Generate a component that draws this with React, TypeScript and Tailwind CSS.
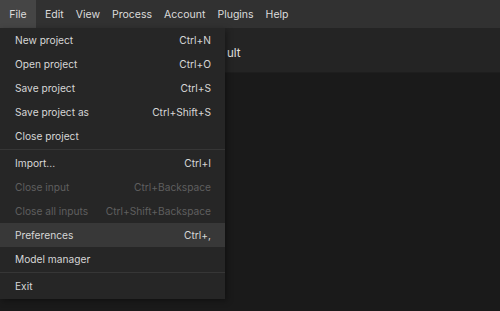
import React from "react";

type Item =
  | { label: string; shortcut?: string; disabled?: boolean; active?: boolean }
  | "sep";

const menus = ["Edit", "View", "Process", "Account", "Plugins", "Help"];

const items: Item[] = [
  { label: "New project", shortcut: "Ctrl+N" },
  { label: "Open project", shortcut: "Ctrl+O" },
  { label: "Save project", shortcut: "Ctrl+S" },
  { label: "Save project as", shortcut: "Ctrl+Shift+S" },
  { label: "Close project" },
  "sep",
  { label: "Import...", shortcut: "Ctrl+I" },
  { label: "Close input", shortcut: "Ctrl+Backspace", disabled: true },
  { label: "Close all inputs", shortcut: "Ctrl+Shift+Backspace", disabled: true },
  { label: "Preferences", shortcut: "Ctrl+,", active: true },
  { label: "Model manager" },
  "sep",
  { label: "Exit" },
];

const App: React.FC = () => {
  return (
    <div
      className="w-[500px] h-[311px] bg-[#1a1a1a] flex flex-col relative overflow-hidden text-[10.2px]"
      style={{ fontFamily: "Inter, 'Liberation Sans', sans-serif" }}
    >
      {/* Menu bar */}
      <div className="h-[28px] bg-[#313131] flex items-stretch text-[#dcdcdc] text-[10.5px]">
        <div className="w-[36px] bg-[#454545] flex items-center justify-center pt-[2px]">File</div>
        <div className="flex items-stretch pl-[3px]">
          {menus.map((m) => (
            <div key={m} className="px-[6px] flex items-center pt-[2px]">
              {m}
            </div>
          ))}
        </div>
      </div>

      {/* Result header behind the menu */}
      <div className="h-[45px] bg-[#242424] border-b border-[#1e1e1e] flex items-center pt-[8px] pl-[227px] text-[#e0e0e0] text-[11.5px]">
        ult
      </div>
      <div className="flex-1 bg-[#1a1a1a]" />

      {/* File dropdown */}
      <div className="absolute left-0 top-[28px] w-[225px] bg-[#262626] pb-px shadow-[2px_2px_6px_rgba(0,0,0,0.35)]">
        {items.map((it, idx) =>
          it === "sep" ? (
            <div key={idx} className="h-px bg-[#363636] my-px" />
          ) : (
            <div
              key={idx}
              className={`h-[24px] flex items-center justify-between pt-[2px] pl-[15px] pr-[14px] ${
                it.active ? "bg-[#383838]" : ""
              } ${it.disabled ? "text-[#5f5f5f]" : "text-[#d6d6d6]"}`}
            >
              <span>{it.label}</span>
              {it.shortcut && <span>{it.shortcut}</span>}
            </div>
          )
        )}
      </div>
    </div>
  );
};

export default App;
